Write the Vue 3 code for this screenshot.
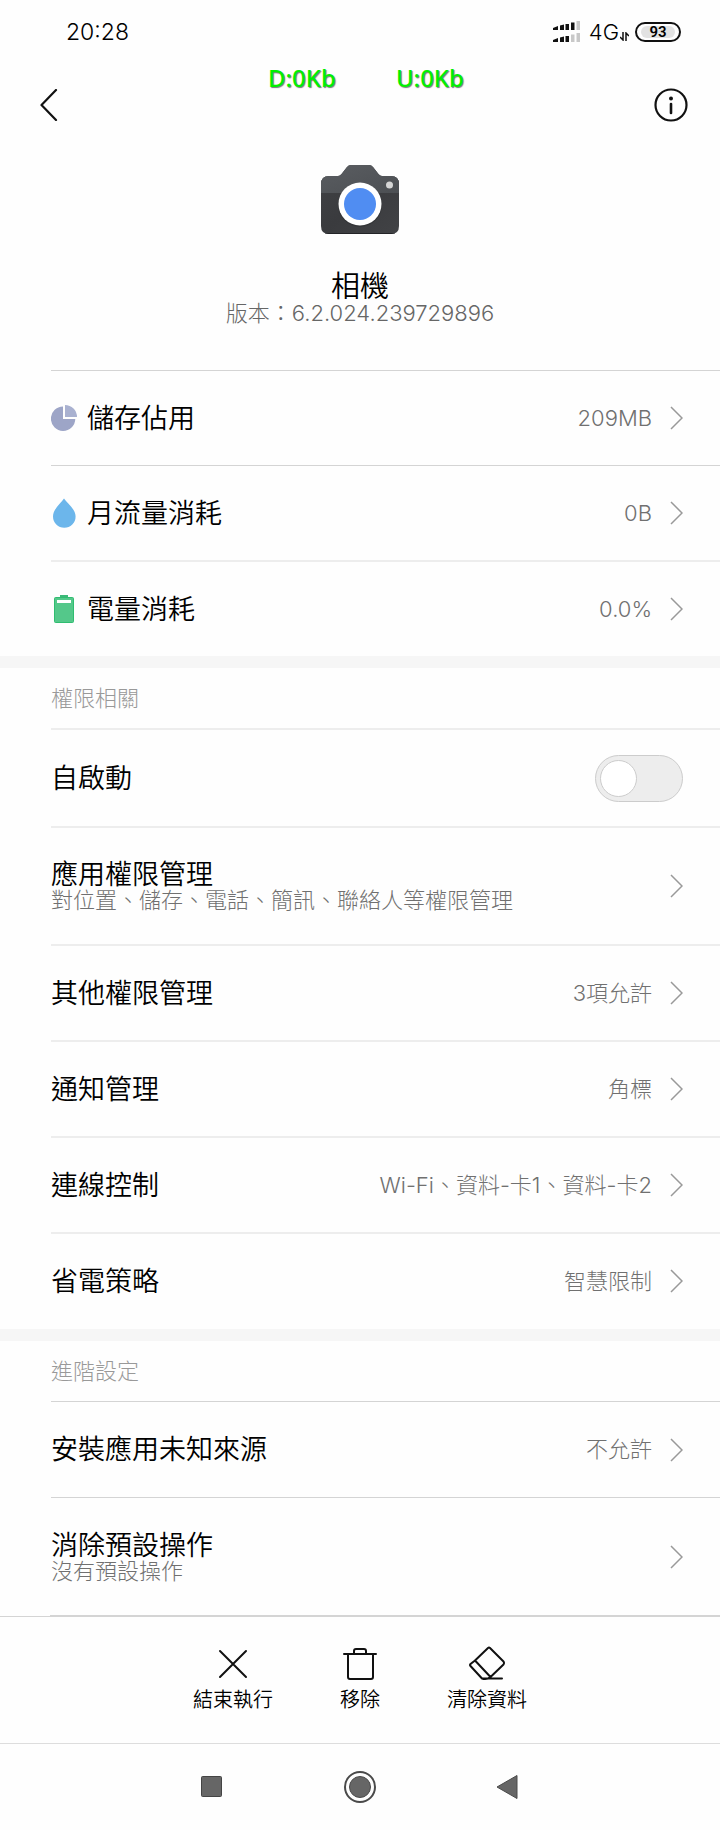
<script setup>
import { ref } from 'vue'

const autoStart = ref(false)

const usage = [
  { icon: 'pie', title: '儲存佔用', value: '209MB' },
  { icon: 'drop', title: '月流量消耗', value: '0B' },
  { icon: 'battery', title: '電量消耗', value: '0.0%', soft: true },
]

const permissions = [
  { title: '應用權限管理', note: '對位置、儲存、電話、簡訊、聯絡人等權限管理' },
  { title: '其他權限管理', value: '3項允許' },
  { title: '通知管理', value: '角標' },
  { title: '連線控制', value: 'Wi-Fi、資料-卡1、資料-卡2' },
  { title: '省電策略', value: '智慧限制' },
]

const advanced = [
  { title: '安裝應用未知來源', value: '不允許' },
  { title: '消除預設操作', note: '沒有預設操作' },
]
</script>

<template>
  <div class="screen">
    <div class="status">
      <time>20:28</time>
      <div class="status-right">
        <svg class="signal" width="28" height="22" viewBox="0 0 28 22" aria-hidden="true">
          <g fill="#111">
            <path d="M0 7l5-2v4H0zM7 4.500l4-1V9H7zM12.500 3h3.500v6h-3.500zM18 1.500h3.500V9H18z" />
            <path d="M0 19l5-2v4H0zM7 16.500l4-1V21H7zM12.500 15h3.500v6h-3.500z" />
          </g>
          <path d="M23.500 0H27v9h-3.500zM18 13.500h3.500V21H18zM23.500 12H27v9h-3.500z" fill="#c8c8c8" />
        </svg>
        <span class="net">4G</span>
        <svg class="arrows" width="9" height="9" viewBox="0 0 9 9" aria-hidden="true">
          <path d="M3 0v8L0 5M6 9V1l3 3" fill="none" stroke="#111" stroke-width="1.500" />
        </svg>
        <span class="charge"><span>93</span></span>
      </div>
    </div>

    <div class="traffic"><span>D:0Kb</span><span>U:0Kb</span></div>

    <header class="bar">
      <button type="button" aria-label="返回">
        <svg width="18" height="32" viewBox="0 0 18 32"><path d="M16 1L1.500 16 16 31" fill="none" stroke="#111" stroke-width="2.200" stroke-linecap="round" stroke-linejoin="round" /></svg>
      </button>
      <button type="button" aria-label="資訊">
        <svg width="34" height="34" viewBox="0 0 34 34">
          <circle cx="17" cy="17" r="15.500" fill="none" stroke="#111" stroke-width="2.200" />
          <circle cx="17" cy="10.500" r="2" fill="#111" />
          <path d="M17 16v9" stroke="#111" stroke-width="2.600" stroke-linecap="round" />
        </svg>
      </button>
    </header>

    <section class="app">
      <svg width="80" height="70" viewBox="0 0 80 70" aria-hidden="true">
        <defs>
          <linearGradient id="body" x1="0" y1="0" x2="1" y2="1">
            <stop offset="0" stop-color="#414245" /><stop offset="0.500" stop-color="#3a3b3e" /><stop offset="1" stop-color="#424346" />
          </linearGradient>
          <linearGradient id="top" x1="0" y1="0" x2="1" y2="1">
            <stop offset="0" stop-color="#5a5d61" /><stop offset="1" stop-color="#4c4f53" />
          </linearGradient>
          <clipPath id="shape"><path d="M9 11h9q2 0 3.500-2L27 2q1.500-2 4-2h18q2.500 0 4 2l5.500 7q1.500 2 3.500 2h9q8 0 8 8v42q0 8-8 8H9q-8 0-8-8V19q0-8 8-8z" /></clipPath>
        </defs>
        <g clip-path="url(#shape)">
          <path d="M0 0h80v70H0z" fill="url(#body)" />
          <path d="M0 0h80v28H0z" fill="url(#top)" />
          <path d="M0 68h80v2H0z" fill="#232427" />
        </g>
        <circle cx="40" cy="40" r="22" fill="#2c2d30" opacity="0.500" />
        <circle cx="40" cy="39" r="21.500" fill="#fff" />
        <circle cx="40" cy="39" r="16" fill="#508df2" />
        <circle cx="69.500" cy="20" r="3.500" fill="#d5d5d5" />
      </svg>
      <h1>相機</h1>
      <p>版本：6.2.024.239729896</p>
    </section>

    <ul class="list">
      <li v-for="r in usage" :key="r.title" :class="{ soft: r.soft }">
        <button type="button" class="row">
          <svg v-if="r.icon === 'pie'" class="lead" width="26" height="28" viewBox="0 0 26 28" aria-hidden="true">
            <path d="M12 2.500v12.500h12.300A12.200 12.200 0 1 1 12 2.500z" fill="#9da5c7" />
            <path d="M14 1a12 12 0 0 1 12 12H14z" fill="#a9b1d0" />
          </svg>
          <svg v-else-if="r.icon === 'drop'" class="lead" width="26" height="30" viewBox="0 0 26 30" aria-hidden="true">
            <path d="M13 .5C10 5 2 11 2 18.500a11.300 11.300 0 0 0 22.600 0C24.600 11 16 5 13 .5z" fill="#6cb6eb" />
          </svg>
          <svg v-else class="lead" width="26" height="30" viewBox="0 0 26 30" aria-hidden="true">
            <path d="M9 1h8v3H9z" fill="#3cb878" />
            <rect x="3.500" y="3.500" width="19" height="25" rx="1" fill="#54c88a" stroke="#2fbd70" />
            <path d="M6 6h14v3H6z" fill="#fff" />
          </svg>
          <span class="title">{{ r.title }}</span>
          <span class="value">{{ r.value }}</span>
          <svg class="chev" width="13" height="24" viewBox="0 0 13 24" aria-hidden="true"><path d="M1 1l11 11L1 23" /></svg>
        </button>
      </li>
    </ul>

    <section class="group">
      <h2>權限相關</h2>
      <ul class="list">
        <li class="soft">
          <label class="row switch-row">
            <span class="title">自啟動</span>
            <input v-model="autoStart" type="checkbox" class="switch" />
          </label>
        </li>
        <li v-for="r in permissions" :key="r.title" class="soft">
          <button type="button" class="row" :class="{ tall: r.note }">
            <span class="title">{{ r.title }}<small v-if="r.note">{{ r.note }}</small></span>
            <span v-if="r.value" class="value">{{ r.value }}</span>
            <svg class="chev" width="13" height="24" viewBox="0 0 13 24" aria-hidden="true"><path d="M1 1l11 11L1 23" /></svg>
          </button>
        </li>
      </ul>
    </section>

    <section class="group">
      <h2>進階設定</h2>
      <ul class="list closed">
        <li v-for="r in advanced" :key="r.title">
          <button type="button" class="row" :class="{ tall: r.note }">
            <span class="title">{{ r.title }}<small v-if="r.note">{{ r.note }}</small></span>
            <span v-if="r.value" class="value">{{ r.value }}</span>
            <svg class="chev" width="13" height="24" viewBox="0 0 13 24" aria-hidden="true"><path d="M1 1l11 11L1 23" /></svg>
          </button>
        </li>
      </ul>
    </section>

    <footer class="actions">
      <button type="button">
        <svg width="36" height="36" viewBox="0 0 36 36" aria-hidden="true"><path d="M5 5l26 26M31 5L5 31" /></svg>
        結束執行
      </button>
      <button type="button">
        <svg width="36" height="36" viewBox="0 0 36 36" aria-hidden="true"><path d="M2 8h32M6 8v23q0 2 2 2h21q2 0 2-2V8M12 8V5q0-2 2-2h8q2 0 2 2v3" /></svg>
        移除
      </button>
      <button type="button">
        <svg width="36" height="36" viewBox="0 0 36 36" aria-hidden="true"><path d="M19 2q1-1 2 0l13.500 13.500q1 1.500 0 3L21.500 31 6 14.500zM6 14.500L1.500 18q-1 1 0 2L13 32.500h20M13 32.500q5 1.500 8.500-1.500" /></svg>
        清除資料
      </button>
    </footer>

    <nav class="keys">
      <button type="button" aria-label="最近使用">
        <svg width="34" height="34" viewBox="0 0 34 34"><rect x="6.500" y="6.500" width="20" height="20" rx="1" fill="#666" stroke="#444" /></svg>
      </button>
      <button type="button" aria-label="主畫面">
        <svg width="34" height="34" viewBox="0 0 34 34"><circle cx="17" cy="17" r="15" fill="none" stroke="#4a4a4a" stroke-width="2" /><circle cx="17" cy="17" r="10.500" fill="#666" stroke="#4a4a4a" /></svg>
      </button>
      <button type="button" aria-label="返回上一頁">
        <svg width="34" height="34" viewBox="0 0 34 34"><path d="M6 17L26 5.500v23z" fill="#666" stroke="#4a4a4a" stroke-linejoin="round" /></svg>
      </button>
    </nav>
  </div>
</template>

<style>
body {
  background: #fefefe;
}
</style>

<style scoped>
.screen {
  position: relative;
  color: #000;
  background: #fefefe;
  font-family: Inter, "Noto Sans CJK TC", sans-serif;
  font-weight: 350;
}
button {
  margin: 0;
  padding: 0;
  border: 0;
  background: none;
  color: inherit;
  font: inherit;
  text-align: left;
}
svg {
  display: block;
  flex: none;
}
ul, h1, h2, p {
  margin: 0;
  padding: 0;
  list-style: none;
  font-weight: 350;
}
.status {
  display: flex;
  align-items: center;
  justify-content: space-between;
  height: 64px;
  padding: 0 39px 0 66px;
  font-size: 23px;
}
.status-right {
  display: flex;
  align-items: center;
}
.net {
  margin-left: 8px;
  font-size: 22px;
}
.arrows {
  margin: 9px 6px 0 1px;
}
.charge {
  display: flex;
  box-sizing: border-box;
  width: 46px;
  height: 20px;
  padding: 2px 4px;
  border: 2px solid #111;
  border-radius: 10px;
}
.charge span {
  flex: 1;
  border-radius: 6px;
  background: #e2e2e2;
  font-family: Roboto, sans-serif;
  font-size: 15px;
  font-weight: 600;
  line-height: 12px;
  text-align: center;
}
.traffic {
  position: absolute;
  top: 62px;
  left: 0;
  right: 0;
  display: flex;
  justify-content: center;
  gap: 60px;
  padding-left: 12px;
  color: #00f000;
  font: 500 24px/32px "Noto Sans", sans-serif;
  text-shadow: 1px 1px 1px #777;
}
.bar {
  display: flex;
  align-items: center;
  justify-content: space-between;
  height: 82px;
  padding: 0 32px 0 40px;
}
.app {
  display: flex;
  flex-direction: column;
  align-items: center;
  height: 205px;
  padding-top: 19px;
}
.app h1 {
  margin-top: 38px;
  font-size: 29px;
  line-height: 28px;
}
.app p {
  color: #666;
  font-size: 22px;
  font-weight: 300;
  line-height: 25px;
}
.list {
  padding-left: 51px;
}
.list li {
  border-top: 1px solid #d4d4d4;
}
.list .soft {
  border-top: 2px solid #ededed;
}
.closed {
  border-bottom: 1px solid #d4d4d4;
  border-image: linear-gradient(to right, transparent 51px, #d4d4d4 51px) 1;
}
.row {
  display: flex;
  align-items: center;
  width: 100%;
  height: 94px;
  padding-right: 37px;
}
.group .row {
  height: 95px;
}
.group .soft .row {
  height: 94px;
}
.group .row.tall {
  height: 117px;
}
.group .soft .row.tall {
  height: 116px;
}
.group .row.switch-row {
  box-sizing: border-box;
  height: 96px;
}
.lead {
  margin-right: 10px;
}
.title {
  flex: 1;
  font-size: 27px;
  line-height: 27px;
}
.tall .title {
  padding-top: 2px;
}
.title small {
  display: block;
  color: #707070;
  font-size: 22px;
  font-weight: 300;
  line-height: 25px;
}
.value {
  margin-right: 18px;
  color: #707070;
  font-size: 22px;
  font-weight: 300;
  line-height: 27px;
}
.chev path {
  fill: none;
  stroke: #999;
  stroke-width: 1.500;
}
.group {
  border-top: 12px solid #f6f6f6;
}
.group + .group {
  margin-top: 1px;
}
.group h2 {
  padding-left: 51px;
  color: #999;
  font-size: 22px;
  font-weight: 300;
  line-height: 60px;
}
.switch {
  appearance: none;
  box-sizing: border-box;
  display: flex;
  align-items: center;
  width: 88px;
  height: 47px;
  margin: 0;
  padding: 0 4px;
  border: 1px solid #ccc;
  border-radius: 24px;
  background: #ededed;
}
.switch::before {
  content: "";
  box-sizing: border-box;
  width: 37px;
  height: 37px;
  border: 1px solid #ccc;
  border-radius: 50%;
  background: #fff;
}
.switch:checked {
  justify-content: flex-end;
  background: #4a90e2;
}
.actions {
  display: grid;
  grid-template-columns: repeat(3, 127px);
  justify-content: center;
  height: 126px;
  border-top: 1px solid #d4d4d4;
}
.actions button {
  display: flex;
  flex-direction: column;
  align-items: center;
  gap: 4px;
  padding-top: 29px;
  font-size: 20px;
  line-height: 28px;
}
.actions path {
  fill: none;
  stroke: #111;
  stroke-width: 2;
  stroke-linecap: round;
  stroke-linejoin: round;
}
.keys {
  display: grid;
  grid-template-columns: repeat(3, 148px);
  justify-content: center;
  justify-items: center;
  height: 86px;
  border-top: 1px solid #ddd;
}
</style>
